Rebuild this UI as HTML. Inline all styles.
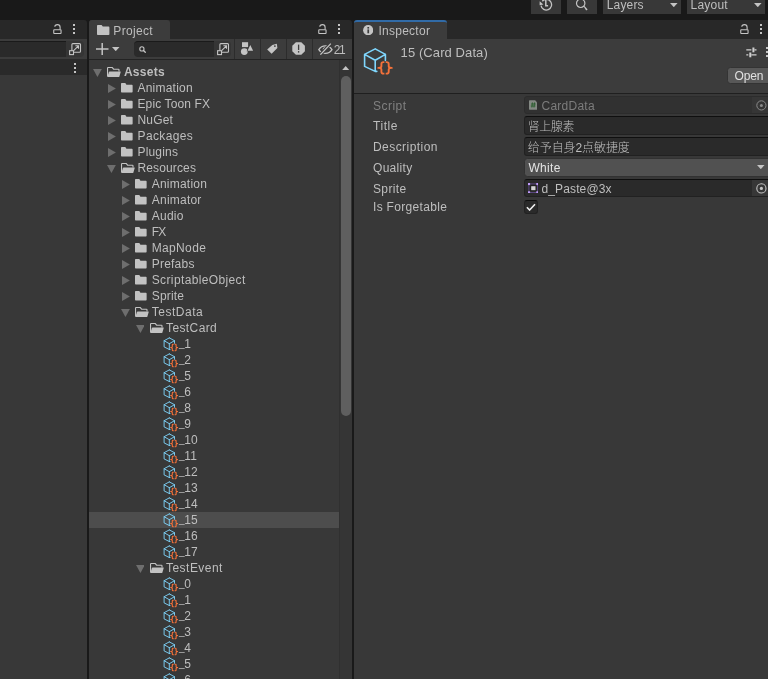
<!DOCTYPE html>
<html><head><meta charset="utf-8"><title>Unity</title>
<style>
html,body{margin:0;padding:0;}
body{width:768px;height:679px;overflow:hidden;background:#191919;position:relative;font-family:"Liberation Sans","Noto Sans CJK SC",sans-serif;font-size:12px;color:#bebebe;}
#r{position:absolute;left:0;top:0;width:768px;height:679px;overflow:hidden;will-change:transform;}
#r div,#r svg,#r span{position:absolute;display:block;}
#r span{white-space:pre;line-height:16px;height:16px;}
#r i{font-style:normal;font-size:10px;position:relative;top:-0.6px;margin-right:-0.45px;}
</style></head><body><div id="r">
<div style="left:531px;top:0px;width:30px;height:13.6px;background:#383838;"></div>
<div style="left:567px;top:0px;width:30px;height:13.6px;background:#383838;"></div>
<div style="left:603px;top:0px;width:78px;height:13.6px;background:#383838;"></div>
<div style="left:687px;top:0px;width:78px;height:13.6px;background:#383838;"></div>
<svg style="left:538px;top:0px" width="16" height="12" viewBox="0 0 16 12"><path d="M3.05 5.6A5.3 5.3 0 1 0 4.3 1.2" fill="none" stroke="#c4c4c4" stroke-width="1.3"/><path d="M1.7 1.3L5.4 4.4L1.6 5.2Z" fill="#c4c4c4"/><path d="M7.8 -1V5.7H10.1" fill="none" stroke="#c4c4c4" stroke-width="1.5"/></svg>
<svg style="left:574px;top:0px" width="16" height="12" viewBox="0 0 16 12"><circle cx="6.7" cy="3.3" r="4.2" fill="none" stroke="#c4c4c4" stroke-width="1.2"/><path d="M9.7 6.6L10.6 5.9L13.6 9.4L12.2 10.6Z" fill="#c4c4c4"/></svg>
<svg style="left:670.2px;top:3.2px" width="7.6" height="4.2" viewBox="0 0 7.6 4.2"><path d="M0 0H7.6L3.8 4.2Z" fill="#c4c4c4"/></svg>
<svg style="left:754.2px;top:3.2px" width="7.6" height="4.2" viewBox="0 0 7.6 4.2"><path d="M0 0H7.6L3.8 4.2Z" fill="#c4c4c4"/></svg>
<div style="left:0px;top:20px;width:87.3px;height:18.6px;background:#282828;border-radius:0 3px 0 0"></div>
<div style="left:0px;top:38.5px;width:87.3px;height:20.5px;background:#3c3c3c;"></div>
<div style="left:0px;top:59px;width:87.3px;height:16.2px;background:#2a2a2a;"></div>
<div style="left:0px;top:75.2px;width:87.3px;height:604px;background:#383838;"></div>
<svg style="left:53px;top:24px" width="10" height="11" viewBox="0 0 10 11"><rect x="0.75" y="5.75" width="7.3" height="3.7" rx="0.5" fill="none" stroke="#c4c4c4" stroke-width="1.1"/><path d="M1.8 2.7Q1.9 0.65 4.4 0.65Q7.1 0.65 7.1 3.3V5.6" fill="none" stroke="#c4c4c4" stroke-width="1.1"/></svg>
<div style="left:73px;top:24.1px;width:2.4px;height:2.2px;background:#c4c4c4;"></div>
<div style="left:73px;top:27.9px;width:2.4px;height:2.2px;background:#c4c4c4;"></div>
<div style="left:73px;top:31.7px;width:2.4px;height:2.2px;background:#c4c4c4;"></div>
<div style="left:-4px;top:41px;width:70.2px;height:15.5px;background:#2a2a2a;border-top:1px solid #1a1a1a;box-sizing:border-box"></div>
<div style="left:66.1px;top:41px;width:17.6px;height:15.5px;background:#353535;border-radius:0 4px 4px 0"></div>
<svg style="left:68.85px;top:42.8px" width="13" height="13" viewBox="0 0 13 13"><rect x="2.9" y="0.6" width="8.6" height="8.6" rx="1" fill="none" stroke="#c4c4c4" stroke-width="1.1"/><rect x="0.6" y="7.7" width="3.9" height="3.9" fill="#353535" stroke="#c4c4c4" stroke-width="1.1"/><path d="M4.6 7.6L9.4 2.8M6.4 2.7H9.5V5.8" fill="none" stroke="#c4c4c4" stroke-width="1.1"/></svg>
<div style="left:74px;top:63.2px;width:2.4px;height:2.2px;background:#c4c4c4;"></div>
<div style="left:74px;top:67.2px;width:2.4px;height:2.2px;background:#c4c4c4;"></div>
<div style="left:74px;top:71.2px;width:2.4px;height:2.2px;background:#c4c4c4;"></div>
<div style="left:89.3px;top:20px;width:262.8px;height:18.6px;background:#282828;border-radius:3px 3px 0 0"></div>
<div style="left:89.3px;top:20px;width:80.7px;height:19px;background:#3c3c3c;border-radius:3px 3px 0 0"></div>
<div style="left:89.3px;top:38.5px;width:262.8px;height:20.3px;background:#3c3c3c;"></div>
<div style="left:89.3px;top:58.6px;width:262.8px;height:1px;background:#232323;"></div>
<div style="left:89.3px;top:59.6px;width:262.8px;height:620px;background:#383838;"></div>
<svg style="left:96.7px;top:25px" width="13" height="10" viewBox="0 0 13 10"><path d="M0.8 0H4.6L5.8 1.6H11.6Q12.4 1.6 12.4 2.4V9.2Q12.4 10 11.6 10H0.8Q0 10 0 9.2V0.8Q0 0 0.8 0Z" fill="#c2c2c2"/></svg>
<svg style="left:317.6px;top:24px" width="10" height="11" viewBox="0 0 10 11"><rect x="0.75" y="5.75" width="7.3" height="3.7" rx="0.5" fill="none" stroke="#c4c4c4" stroke-width="1.1"/><path d="M1.8 2.7Q1.9 0.65 4.4 0.65Q7.1 0.65 7.1 3.3V5.6" fill="none" stroke="#c4c4c4" stroke-width="1.1"/></svg>
<div style="left:337.9px;top:24.1px;width:2.4px;height:2.2px;background:#c4c4c4;"></div>
<div style="left:337.9px;top:27.9px;width:2.4px;height:2.2px;background:#c4c4c4;"></div>
<div style="left:337.9px;top:31.7px;width:2.4px;height:2.2px;background:#c4c4c4;"></div>
<svg style="left:95.8px;top:43px" width="13" height="12" viewBox="0 0 13 12"><path d="M6.2 0V12M0 6H12.5" stroke="#c4c4c4" stroke-width="1.5" fill="none"/></svg>
<svg style="left:112.2px;top:47.2px" width="7.5" height="4.2" viewBox="0 0 7.5 4.2"><path d="M0 0H7.5L3.75 4.2Z" fill="#c4c4c4"/></svg>
<div style="left:134.2px;top:41px;width:80px;height:15.5px;background:#2a2a2a;border-radius:4px 0 0 4px;border-top:1px solid #1a1a1a;box-sizing:border-box"></div>
<div style="left:213.7px;top:41px;width:17.7px;height:15.5px;background:#353535;border-radius:0 4px 4px 0"></div>
<svg style="left:138.6px;top:45.8px" width="8" height="8" viewBox="0 0 8 8"><circle cx="2.9" cy="2.9" r="2.1" fill="none" stroke="#c4c4c4" stroke-width="1.1"/><path d="M4.5 4.5L6.3 6.3" stroke="#c4c4c4" stroke-width="1.3" stroke-linecap="round"/></svg>
<svg style="left:216.95px;top:42.8px" width="13" height="13" viewBox="0 0 13 13"><rect x="2.9" y="0.6" width="8.6" height="8.6" rx="1" fill="none" stroke="#c4c4c4" stroke-width="1.1"/><rect x="0.6" y="7.7" width="3.9" height="3.9" fill="#353535" stroke="#c4c4c4" stroke-width="1.1"/><path d="M4.6 7.6L9.4 2.8M6.4 2.7H9.5V5.8" fill="none" stroke="#c4c4c4" stroke-width="1.1"/></svg>
<div style="left:234.2px;top:38.5px;width:1px;height:20.2px;background:#2c2c2c;"></div>
<div style="left:260.2px;top:38.5px;width:1px;height:20.2px;background:#2c2c2c;"></div>
<div style="left:285.9px;top:38.5px;width:1px;height:20.2px;background:#2c2c2c;"></div>
<div style="left:312.2px;top:38.5px;width:1px;height:20.2px;background:#2c2c2c;"></div>
<svg style="left:240px;top:42px" width="14" height="14" viewBox="0 0 14 14"><rect x="2" y="0.2" width="6.1" height="4.9" fill="#c4c4c4"/><circle cx="4.3" cy="9.6" r="3.9" fill="#3c3c3c"/><circle cx="4.3" cy="9.6" r="3.4" fill="#c4c4c4"/><path d="M10.3 2.2L14 9.2H6.6Z" fill="#3c3c3c"/><path d="M10.3 3.1L13.1 8.7H7.5Z" fill="#c4c4c4"/></svg>
<svg style="left:266px;top:42px" width="13" height="13" viewBox="0 0 13 13"><path d="M1.2 7.5L6.3 3L10.8 1.7L11.4 6.1L5.6 11.8Z" fill="#c4c4c4"/><circle cx="8.9" cy="4.1" r="0.9" fill="#3c3c3c"/></svg>
<svg style="left:292px;top:42.1px" width="13.2" height="13" viewBox="0 0 14 14"><path d="M4.1 0.2H9.9L13.8 4.1V9.9L9.9 13.8H4.1L0.2 9.9V4.1Z" fill="#c4c4c4"/><rect x="6.3" y="2.8" width="1.4" height="5.8" fill="#3c3c3c"/><rect x="6.3" y="9.8" width="1.4" height="1.6" fill="#3c3c3c"/></svg>
<svg style="left:317.5px;top:43px" width="16" height="12" viewBox="0 0 16 12"><path d="M0.8 6.6Q3.2 2.8 7.4 2.8Q11.6 2.8 14 6.6Q11.6 10.4 7.4 10.4Q3.2 10.4 0.8 6.6Z" fill="none" stroke="#c4c4c4" stroke-width="1.3"/><path d="M5.2 6.6Q5.4 4.6 7.6 4.6" fill="none" stroke="#c4c4c4" stroke-width="1.2"/><path d="M2.4 11.6L12.8 0.6" stroke="#3c3c3c" stroke-width="3.2"/><path d="M2.4 11.6L12.8 0.6" stroke="#c4c4c4" stroke-width="1.3"/></svg>
<div style="left:339.3px;top:59.6px;width:12.800000000000011px;height:620px;background:#353535;border-left:1px solid #303030;box-sizing:border-box"></div>
<svg style="left:342.3px;top:65.6px" width="7.4" height="4.2" viewBox="0 0 7.4 4.2"><path d="M0 4.2L3.7 0L7.4 4.2Z" fill="#c4c4c4"/></svg>
<div style="left:341px;top:75.6px;width:10.2px;height:340.6px;background:#5f5f5f;border-radius:5.1px"></div>
<svg style="left:92.8px;top:69.1px" width="8.9" height="7.9" viewBox="0 0 8.9 7.9"><path d="M0 0H8.9L4.45 7.9Z" fill="#6e6e6e"/></svg>
<svg style="left:106.75px;top:67.1px" width="14" height="10" viewBox="0 0 14 10"><path d="M0.55 9.6V1.1Q0.55 0.55 1.1 0.55H5.3L6.6 2.2H11.4Q12 2.2 12 2.8V4.4" fill="none" stroke="#c2c2c2" stroke-width="1.1"/><path d="M2.6 4.4H13.4Q13.9 4.4 13.7 4.9L12.4 9.5Q12.2 10 11.7 10H0.4L1.9 4.9Q2.1 4.4 2.6 4.4Z" fill="#c2c2c2"/></svg>
<svg style="left:107.85px;top:84.05px" width="7.9" height="8.9" viewBox="0 0 7.9 8.9"><path d="M0 0L7.9 4.45L0 8.9Z" fill="#6e6e6e"/></svg>
<svg style="left:120.75px;top:83.3px" width="12.2" height="9.6" viewBox="0 0 13 10"><path d="M0.8 0H4.6L5.8 1.7H11.6Q12.4 1.7 12.4 2.5V9.2Q12.4 10 11.6 10H0.8Q0 10 0 9.2V0.8Q0 0 0.8 0Z" fill="#c2c2c2"/></svg>
<svg style="left:107.85px;top:100.05px" width="7.9" height="8.9" viewBox="0 0 7.9 8.9"><path d="M0 0L7.9 4.45L0 8.9Z" fill="#6e6e6e"/></svg>
<svg style="left:120.75px;top:99.3px" width="12.2" height="9.6" viewBox="0 0 13 10"><path d="M0.8 0H4.6L5.8 1.7H11.6Q12.4 1.7 12.4 2.5V9.2Q12.4 10 11.6 10H0.8Q0 10 0 9.2V0.8Q0 0 0.8 0Z" fill="#c2c2c2"/></svg>
<svg style="left:107.85px;top:116.05px" width="7.9" height="8.9" viewBox="0 0 7.9 8.9"><path d="M0 0L7.9 4.45L0 8.9Z" fill="#6e6e6e"/></svg>
<svg style="left:120.75px;top:115.3px" width="12.2" height="9.6" viewBox="0 0 13 10"><path d="M0.8 0H4.6L5.8 1.7H11.6Q12.4 1.7 12.4 2.5V9.2Q12.4 10 11.6 10H0.8Q0 10 0 9.2V0.8Q0 0 0.8 0Z" fill="#c2c2c2"/></svg>
<svg style="left:107.85px;top:132.05px" width="7.9" height="8.9" viewBox="0 0 7.9 8.9"><path d="M0 0L7.9 4.45L0 8.9Z" fill="#6e6e6e"/></svg>
<svg style="left:120.75px;top:131.3px" width="12.2" height="9.6" viewBox="0 0 13 10"><path d="M0.8 0H4.6L5.8 1.7H11.6Q12.4 1.7 12.4 2.5V9.2Q12.4 10 11.6 10H0.8Q0 10 0 9.2V0.8Q0 0 0.8 0Z" fill="#c2c2c2"/></svg>
<svg style="left:107.85px;top:148.05px" width="7.9" height="8.9" viewBox="0 0 7.9 8.9"><path d="M0 0L7.9 4.45L0 8.9Z" fill="#6e6e6e"/></svg>
<svg style="left:120.75px;top:147.3px" width="12.2" height="9.6" viewBox="0 0 13 10"><path d="M0.8 0H4.6L5.8 1.7H11.6Q12.4 1.7 12.4 2.5V9.2Q12.4 10 11.6 10H0.8Q0 10 0 9.2V0.8Q0 0 0.8 0Z" fill="#c2c2c2"/></svg>
<svg style="left:107.05px;top:165.1px" width="8.9" height="7.9" viewBox="0 0 8.9 7.9"><path d="M0 0H8.9L4.45 7.9Z" fill="#6e6e6e"/></svg>
<svg style="left:121.0px;top:163.1px" width="14" height="10" viewBox="0 0 14 10"><path d="M0.55 9.6V1.1Q0.55 0.55 1.1 0.55H5.3L6.6 2.2H11.4Q12 2.2 12 2.8V4.4" fill="none" stroke="#c2c2c2" stroke-width="1.1"/><path d="M2.6 4.4H13.4Q13.9 4.4 13.7 4.9L12.4 9.5Q12.2 10 11.7 10H0.4L1.9 4.9Q2.1 4.4 2.6 4.4Z" fill="#c2c2c2"/></svg>
<svg style="left:122.1px;top:180.05px" width="7.9" height="8.9" viewBox="0 0 7.9 8.9"><path d="M0 0L7.9 4.45L0 8.9Z" fill="#6e6e6e"/></svg>
<svg style="left:135.0px;top:179.3px" width="12.2" height="9.6" viewBox="0 0 13 10"><path d="M0.8 0H4.6L5.8 1.7H11.6Q12.4 1.7 12.4 2.5V9.2Q12.4 10 11.6 10H0.8Q0 10 0 9.2V0.8Q0 0 0.8 0Z" fill="#c2c2c2"/></svg>
<svg style="left:122.1px;top:196.05px" width="7.9" height="8.9" viewBox="0 0 7.9 8.9"><path d="M0 0L7.9 4.45L0 8.9Z" fill="#6e6e6e"/></svg>
<svg style="left:135.0px;top:195.3px" width="12.2" height="9.6" viewBox="0 0 13 10"><path d="M0.8 0H4.6L5.8 1.7H11.6Q12.4 1.7 12.4 2.5V9.2Q12.4 10 11.6 10H0.8Q0 10 0 9.2V0.8Q0 0 0.8 0Z" fill="#c2c2c2"/></svg>
<svg style="left:122.1px;top:212.05px" width="7.9" height="8.9" viewBox="0 0 7.9 8.9"><path d="M0 0L7.9 4.45L0 8.9Z" fill="#6e6e6e"/></svg>
<svg style="left:135.0px;top:211.3px" width="12.2" height="9.6" viewBox="0 0 13 10"><path d="M0.8 0H4.6L5.8 1.7H11.6Q12.4 1.7 12.4 2.5V9.2Q12.4 10 11.6 10H0.8Q0 10 0 9.2V0.8Q0 0 0.8 0Z" fill="#c2c2c2"/></svg>
<svg style="left:122.1px;top:228.05px" width="7.9" height="8.9" viewBox="0 0 7.9 8.9"><path d="M0 0L7.9 4.45L0 8.9Z" fill="#6e6e6e"/></svg>
<svg style="left:135.0px;top:227.3px" width="12.2" height="9.6" viewBox="0 0 13 10"><path d="M0.8 0H4.6L5.8 1.7H11.6Q12.4 1.7 12.4 2.5V9.2Q12.4 10 11.6 10H0.8Q0 10 0 9.2V0.8Q0 0 0.8 0Z" fill="#c2c2c2"/></svg>
<svg style="left:122.1px;top:244.05px" width="7.9" height="8.9" viewBox="0 0 7.9 8.9"><path d="M0 0L7.9 4.45L0 8.9Z" fill="#6e6e6e"/></svg>
<svg style="left:135.0px;top:243.3px" width="12.2" height="9.6" viewBox="0 0 13 10"><path d="M0.8 0H4.6L5.8 1.7H11.6Q12.4 1.7 12.4 2.5V9.2Q12.4 10 11.6 10H0.8Q0 10 0 9.2V0.8Q0 0 0.8 0Z" fill="#c2c2c2"/></svg>
<svg style="left:122.1px;top:260.05px" width="7.9" height="8.9" viewBox="0 0 7.9 8.9"><path d="M0 0L7.9 4.45L0 8.9Z" fill="#6e6e6e"/></svg>
<svg style="left:135.0px;top:259.3px" width="12.2" height="9.6" viewBox="0 0 13 10"><path d="M0.8 0H4.6L5.8 1.7H11.6Q12.4 1.7 12.4 2.5V9.2Q12.4 10 11.6 10H0.8Q0 10 0 9.2V0.8Q0 0 0.8 0Z" fill="#c2c2c2"/></svg>
<svg style="left:122.1px;top:276.05px" width="7.9" height="8.9" viewBox="0 0 7.9 8.9"><path d="M0 0L7.9 4.45L0 8.9Z" fill="#6e6e6e"/></svg>
<svg style="left:135.0px;top:275.3px" width="12.2" height="9.6" viewBox="0 0 13 10"><path d="M0.8 0H4.6L5.8 1.7H11.6Q12.4 1.7 12.4 2.5V9.2Q12.4 10 11.6 10H0.8Q0 10 0 9.2V0.8Q0 0 0.8 0Z" fill="#c2c2c2"/></svg>
<svg style="left:122.1px;top:292.05px" width="7.9" height="8.9" viewBox="0 0 7.9 8.9"><path d="M0 0L7.9 4.45L0 8.9Z" fill="#6e6e6e"/></svg>
<svg style="left:135.0px;top:291.3px" width="12.2" height="9.6" viewBox="0 0 13 10"><path d="M0.8 0H4.6L5.8 1.7H11.6Q12.4 1.7 12.4 2.5V9.2Q12.4 10 11.6 10H0.8Q0 10 0 9.2V0.8Q0 0 0.8 0Z" fill="#c2c2c2"/></svg>
<svg style="left:121.3px;top:309.1px" width="8.9" height="7.9" viewBox="0 0 8.9 7.9"><path d="M0 0H8.9L4.45 7.9Z" fill="#6e6e6e"/></svg>
<svg style="left:135.25px;top:307.1px" width="14" height="10" viewBox="0 0 14 10"><path d="M0.55 9.6V1.1Q0.55 0.55 1.1 0.55H5.3L6.6 2.2H11.4Q12 2.2 12 2.8V4.4" fill="none" stroke="#c2c2c2" stroke-width="1.1"/><path d="M2.6 4.4H13.4Q13.9 4.4 13.7 4.9L12.4 9.5Q12.2 10 11.7 10H0.4L1.9 4.9Q2.1 4.4 2.6 4.4Z" fill="#c2c2c2"/></svg>
<svg style="left:135.55px;top:325.1px" width="8.9" height="7.9" viewBox="0 0 8.9 7.9"><path d="M0 0H8.9L4.45 7.9Z" fill="#6e6e6e"/></svg>
<svg style="left:149.5px;top:323.1px" width="14" height="10" viewBox="0 0 14 10"><path d="M0.55 9.6V1.1Q0.55 0.55 1.1 0.55H5.3L6.6 2.2H11.4Q12 2.2 12 2.8V4.4" fill="none" stroke="#c2c2c2" stroke-width="1.1"/><path d="M2.6 4.4H13.4Q13.9 4.4 13.7 4.9L12.4 9.5Q12.2 10 11.7 10H0.4L1.9 4.9Q2.1 4.4 2.6 4.4Z" fill="#c2c2c2"/></svg>
<svg style="left:161.8px;top:335.9px" width="16" height="16" viewBox="0 0 32 32"><g fill="none" stroke="#7fd6fd" stroke-width="1.8" stroke-linejoin="round" stroke-linecap="round"><path d="M14.6 3.8L25 9.4V14.6M14.6 3.8L4.2 9.4V21.8L14.6 27V15.4L4.2 9.4M14.6 15.4L25 9.4M14.6 27H16"/></g><g fill="none" stroke="#f4713a" stroke-width="2.2" stroke-linejoin="round"><path d="M23.6 16.6H22Q20.6 16.6 20.6 18V21.4Q20.6 23.1 17.4 23.1Q20.6 23.1 20.6 24.8V28.2Q20.6 29.6 22 29.6H23.6"/><path d="M25.2 16.6H26.8Q28.2 16.6 28.2 18V21.4Q28.2 23.1 31.4 23.1Q28.2 23.1 28.2 24.8V28.2Q28.2 29.6 26.8 29.6H25.2"/></g></svg>
<svg style="left:161.8px;top:351.9px" width="16" height="16" viewBox="0 0 32 32"><g fill="none" stroke="#7fd6fd" stroke-width="1.8" stroke-linejoin="round" stroke-linecap="round"><path d="M14.6 3.8L25 9.4V14.6M14.6 3.8L4.2 9.4V21.8L14.6 27V15.4L4.2 9.4M14.6 15.4L25 9.4M14.6 27H16"/></g><g fill="none" stroke="#f4713a" stroke-width="2.2" stroke-linejoin="round"><path d="M23.6 16.6H22Q20.6 16.6 20.6 18V21.4Q20.6 23.1 17.4 23.1Q20.6 23.1 20.6 24.8V28.2Q20.6 29.6 22 29.6H23.6"/><path d="M25.2 16.6H26.8Q28.2 16.6 28.2 18V21.4Q28.2 23.1 31.4 23.1Q28.2 23.1 28.2 24.8V28.2Q28.2 29.6 26.8 29.6H25.2"/></g></svg>
<svg style="left:161.8px;top:367.9px" width="16" height="16" viewBox="0 0 32 32"><g fill="none" stroke="#7fd6fd" stroke-width="1.8" stroke-linejoin="round" stroke-linecap="round"><path d="M14.6 3.8L25 9.4V14.6M14.6 3.8L4.2 9.4V21.8L14.6 27V15.4L4.2 9.4M14.6 15.4L25 9.4M14.6 27H16"/></g><g fill="none" stroke="#f4713a" stroke-width="2.2" stroke-linejoin="round"><path d="M23.6 16.6H22Q20.6 16.6 20.6 18V21.4Q20.6 23.1 17.4 23.1Q20.6 23.1 20.6 24.8V28.2Q20.6 29.6 22 29.6H23.6"/><path d="M25.2 16.6H26.8Q28.2 16.6 28.2 18V21.4Q28.2 23.1 31.4 23.1Q28.2 23.1 28.2 24.8V28.2Q28.2 29.6 26.8 29.6H25.2"/></g></svg>
<svg style="left:161.8px;top:383.9px" width="16" height="16" viewBox="0 0 32 32"><g fill="none" stroke="#7fd6fd" stroke-width="1.8" stroke-linejoin="round" stroke-linecap="round"><path d="M14.6 3.8L25 9.4V14.6M14.6 3.8L4.2 9.4V21.8L14.6 27V15.4L4.2 9.4M14.6 15.4L25 9.4M14.6 27H16"/></g><g fill="none" stroke="#f4713a" stroke-width="2.2" stroke-linejoin="round"><path d="M23.6 16.6H22Q20.6 16.6 20.6 18V21.4Q20.6 23.1 17.4 23.1Q20.6 23.1 20.6 24.8V28.2Q20.6 29.6 22 29.6H23.6"/><path d="M25.2 16.6H26.8Q28.2 16.6 28.2 18V21.4Q28.2 23.1 31.4 23.1Q28.2 23.1 28.2 24.8V28.2Q28.2 29.6 26.8 29.6H25.2"/></g></svg>
<svg style="left:161.8px;top:399.9px" width="16" height="16" viewBox="0 0 32 32"><g fill="none" stroke="#7fd6fd" stroke-width="1.8" stroke-linejoin="round" stroke-linecap="round"><path d="M14.6 3.8L25 9.4V14.6M14.6 3.8L4.2 9.4V21.8L14.6 27V15.4L4.2 9.4M14.6 15.4L25 9.4M14.6 27H16"/></g><g fill="none" stroke="#f4713a" stroke-width="2.2" stroke-linejoin="round"><path d="M23.6 16.6H22Q20.6 16.6 20.6 18V21.4Q20.6 23.1 17.4 23.1Q20.6 23.1 20.6 24.8V28.2Q20.6 29.6 22 29.6H23.6"/><path d="M25.2 16.6H26.8Q28.2 16.6 28.2 18V21.4Q28.2 23.1 31.4 23.1Q28.2 23.1 28.2 24.8V28.2Q28.2 29.6 26.8 29.6H25.2"/></g></svg>
<svg style="left:161.8px;top:415.9px" width="16" height="16" viewBox="0 0 32 32"><g fill="none" stroke="#7fd6fd" stroke-width="1.8" stroke-linejoin="round" stroke-linecap="round"><path d="M14.6 3.8L25 9.4V14.6M14.6 3.8L4.2 9.4V21.8L14.6 27V15.4L4.2 9.4M14.6 15.4L25 9.4M14.6 27H16"/></g><g fill="none" stroke="#f4713a" stroke-width="2.2" stroke-linejoin="round"><path d="M23.6 16.6H22Q20.6 16.6 20.6 18V21.4Q20.6 23.1 17.4 23.1Q20.6 23.1 20.6 24.8V28.2Q20.6 29.6 22 29.6H23.6"/><path d="M25.2 16.6H26.8Q28.2 16.6 28.2 18V21.4Q28.2 23.1 31.4 23.1Q28.2 23.1 28.2 24.8V28.2Q28.2 29.6 26.8 29.6H25.2"/></g></svg>
<svg style="left:161.8px;top:431.9px" width="16" height="16" viewBox="0 0 32 32"><g fill="none" stroke="#7fd6fd" stroke-width="1.8" stroke-linejoin="round" stroke-linecap="round"><path d="M14.6 3.8L25 9.4V14.6M14.6 3.8L4.2 9.4V21.8L14.6 27V15.4L4.2 9.4M14.6 15.4L25 9.4M14.6 27H16"/></g><g fill="none" stroke="#f4713a" stroke-width="2.2" stroke-linejoin="round"><path d="M23.6 16.6H22Q20.6 16.6 20.6 18V21.4Q20.6 23.1 17.4 23.1Q20.6 23.1 20.6 24.8V28.2Q20.6 29.6 22 29.6H23.6"/><path d="M25.2 16.6H26.8Q28.2 16.6 28.2 18V21.4Q28.2 23.1 31.4 23.1Q28.2 23.1 28.2 24.8V28.2Q28.2 29.6 26.8 29.6H25.2"/></g></svg>
<svg style="left:161.8px;top:447.9px" width="16" height="16" viewBox="0 0 32 32"><g fill="none" stroke="#7fd6fd" stroke-width="1.8" stroke-linejoin="round" stroke-linecap="round"><path d="M14.6 3.8L25 9.4V14.6M14.6 3.8L4.2 9.4V21.8L14.6 27V15.4L4.2 9.4M14.6 15.4L25 9.4M14.6 27H16"/></g><g fill="none" stroke="#f4713a" stroke-width="2.2" stroke-linejoin="round"><path d="M23.6 16.6H22Q20.6 16.6 20.6 18V21.4Q20.6 23.1 17.4 23.1Q20.6 23.1 20.6 24.8V28.2Q20.6 29.6 22 29.6H23.6"/><path d="M25.2 16.6H26.8Q28.2 16.6 28.2 18V21.4Q28.2 23.1 31.4 23.1Q28.2 23.1 28.2 24.8V28.2Q28.2 29.6 26.8 29.6H25.2"/></g></svg>
<svg style="left:161.8px;top:463.9px" width="16" height="16" viewBox="0 0 32 32"><g fill="none" stroke="#7fd6fd" stroke-width="1.8" stroke-linejoin="round" stroke-linecap="round"><path d="M14.6 3.8L25 9.4V14.6M14.6 3.8L4.2 9.4V21.8L14.6 27V15.4L4.2 9.4M14.6 15.4L25 9.4M14.6 27H16"/></g><g fill="none" stroke="#f4713a" stroke-width="2.2" stroke-linejoin="round"><path d="M23.6 16.6H22Q20.6 16.6 20.6 18V21.4Q20.6 23.1 17.4 23.1Q20.6 23.1 20.6 24.8V28.2Q20.6 29.6 22 29.6H23.6"/><path d="M25.2 16.6H26.8Q28.2 16.6 28.2 18V21.4Q28.2 23.1 31.4 23.1Q28.2 23.1 28.2 24.8V28.2Q28.2 29.6 26.8 29.6H25.2"/></g></svg>
<svg style="left:161.8px;top:479.9px" width="16" height="16" viewBox="0 0 32 32"><g fill="none" stroke="#7fd6fd" stroke-width="1.8" stroke-linejoin="round" stroke-linecap="round"><path d="M14.6 3.8L25 9.4V14.6M14.6 3.8L4.2 9.4V21.8L14.6 27V15.4L4.2 9.4M14.6 15.4L25 9.4M14.6 27H16"/></g><g fill="none" stroke="#f4713a" stroke-width="2.2" stroke-linejoin="round"><path d="M23.6 16.6H22Q20.6 16.6 20.6 18V21.4Q20.6 23.1 17.4 23.1Q20.6 23.1 20.6 24.8V28.2Q20.6 29.6 22 29.6H23.6"/><path d="M25.2 16.6H26.8Q28.2 16.6 28.2 18V21.4Q28.2 23.1 31.4 23.1Q28.2 23.1 28.2 24.8V28.2Q28.2 29.6 26.8 29.6H25.2"/></g></svg>
<svg style="left:161.8px;top:495.9px" width="16" height="16" viewBox="0 0 32 32"><g fill="none" stroke="#7fd6fd" stroke-width="1.8" stroke-linejoin="round" stroke-linecap="round"><path d="M14.6 3.8L25 9.4V14.6M14.6 3.8L4.2 9.4V21.8L14.6 27V15.4L4.2 9.4M14.6 15.4L25 9.4M14.6 27H16"/></g><g fill="none" stroke="#f4713a" stroke-width="2.2" stroke-linejoin="round"><path d="M23.6 16.6H22Q20.6 16.6 20.6 18V21.4Q20.6 23.1 17.4 23.1Q20.6 23.1 20.6 24.8V28.2Q20.6 29.6 22 29.6H23.6"/><path d="M25.2 16.6H26.8Q28.2 16.6 28.2 18V21.4Q28.2 23.1 31.4 23.1Q28.2 23.1 28.2 24.8V28.2Q28.2 29.6 26.8 29.6H25.2"/></g></svg>
<div style="left:89.3px;top:512px;width:249.7px;height:16px;background:#4d4d4d;"></div>
<svg style="left:161.8px;top:511.9px" width="16" height="16" viewBox="0 0 32 32"><g fill="none" stroke="#7fd6fd" stroke-width="1.8" stroke-linejoin="round" stroke-linecap="round"><path d="M14.6 3.8L25 9.4V14.6M14.6 3.8L4.2 9.4V21.8L14.6 27V15.4L4.2 9.4M14.6 15.4L25 9.4M14.6 27H16"/></g><g fill="none" stroke="#f4713a" stroke-width="2.2" stroke-linejoin="round"><path d="M23.6 16.6H22Q20.6 16.6 20.6 18V21.4Q20.6 23.1 17.4 23.1Q20.6 23.1 20.6 24.8V28.2Q20.6 29.6 22 29.6H23.6"/><path d="M25.2 16.6H26.8Q28.2 16.6 28.2 18V21.4Q28.2 23.1 31.4 23.1Q28.2 23.1 28.2 24.8V28.2Q28.2 29.6 26.8 29.6H25.2"/></g></svg>
<svg style="left:161.8px;top:527.9px" width="16" height="16" viewBox="0 0 32 32"><g fill="none" stroke="#7fd6fd" stroke-width="1.8" stroke-linejoin="round" stroke-linecap="round"><path d="M14.6 3.8L25 9.4V14.6M14.6 3.8L4.2 9.4V21.8L14.6 27V15.4L4.2 9.4M14.6 15.4L25 9.4M14.6 27H16"/></g><g fill="none" stroke="#f4713a" stroke-width="2.2" stroke-linejoin="round"><path d="M23.6 16.6H22Q20.6 16.6 20.6 18V21.4Q20.6 23.1 17.4 23.1Q20.6 23.1 20.6 24.8V28.2Q20.6 29.6 22 29.6H23.6"/><path d="M25.2 16.6H26.8Q28.2 16.6 28.2 18V21.4Q28.2 23.1 31.4 23.1Q28.2 23.1 28.2 24.8V28.2Q28.2 29.6 26.8 29.6H25.2"/></g></svg>
<svg style="left:161.8px;top:543.9px" width="16" height="16" viewBox="0 0 32 32"><g fill="none" stroke="#7fd6fd" stroke-width="1.8" stroke-linejoin="round" stroke-linecap="round"><path d="M14.6 3.8L25 9.4V14.6M14.6 3.8L4.2 9.4V21.8L14.6 27V15.4L4.2 9.4M14.6 15.4L25 9.4M14.6 27H16"/></g><g fill="none" stroke="#f4713a" stroke-width="2.2" stroke-linejoin="round"><path d="M23.6 16.6H22Q20.6 16.6 20.6 18V21.4Q20.6 23.1 17.4 23.1Q20.6 23.1 20.6 24.8V28.2Q20.6 29.6 22 29.6H23.6"/><path d="M25.2 16.6H26.8Q28.2 16.6 28.2 18V21.4Q28.2 23.1 31.4 23.1Q28.2 23.1 28.2 24.8V28.2Q28.2 29.6 26.8 29.6H25.2"/></g></svg>
<svg style="left:135.55px;top:565.1px" width="8.9" height="7.9" viewBox="0 0 8.9 7.9"><path d="M0 0H8.9L4.45 7.9Z" fill="#6e6e6e"/></svg>
<svg style="left:149.5px;top:563.1px" width="14" height="10" viewBox="0 0 14 10"><path d="M0.55 9.6V1.1Q0.55 0.55 1.1 0.55H5.3L6.6 2.2H11.4Q12 2.2 12 2.8V4.4" fill="none" stroke="#c2c2c2" stroke-width="1.1"/><path d="M2.6 4.4H13.4Q13.9 4.4 13.7 4.9L12.4 9.5Q12.2 10 11.7 10H0.4L1.9 4.9Q2.1 4.4 2.6 4.4Z" fill="#c2c2c2"/></svg>
<svg style="left:161.8px;top:575.9px" width="16" height="16" viewBox="0 0 32 32"><g fill="none" stroke="#7fd6fd" stroke-width="1.8" stroke-linejoin="round" stroke-linecap="round"><path d="M14.6 3.8L25 9.4V14.6M14.6 3.8L4.2 9.4V21.8L14.6 27V15.4L4.2 9.4M14.6 15.4L25 9.4M14.6 27H16"/></g><g fill="none" stroke="#f4713a" stroke-width="2.2" stroke-linejoin="round"><path d="M23.6 16.6H22Q20.6 16.6 20.6 18V21.4Q20.6 23.1 17.4 23.1Q20.6 23.1 20.6 24.8V28.2Q20.6 29.6 22 29.6H23.6"/><path d="M25.2 16.6H26.8Q28.2 16.6 28.2 18V21.4Q28.2 23.1 31.4 23.1Q28.2 23.1 28.2 24.8V28.2Q28.2 29.6 26.8 29.6H25.2"/></g></svg>
<svg style="left:161.8px;top:591.9px" width="16" height="16" viewBox="0 0 32 32"><g fill="none" stroke="#7fd6fd" stroke-width="1.8" stroke-linejoin="round" stroke-linecap="round"><path d="M14.6 3.8L25 9.4V14.6M14.6 3.8L4.2 9.4V21.8L14.6 27V15.4L4.2 9.4M14.6 15.4L25 9.4M14.6 27H16"/></g><g fill="none" stroke="#f4713a" stroke-width="2.2" stroke-linejoin="round"><path d="M23.6 16.6H22Q20.6 16.6 20.6 18V21.4Q20.6 23.1 17.4 23.1Q20.6 23.1 20.6 24.8V28.2Q20.6 29.6 22 29.6H23.6"/><path d="M25.2 16.6H26.8Q28.2 16.6 28.2 18V21.4Q28.2 23.1 31.4 23.1Q28.2 23.1 28.2 24.8V28.2Q28.2 29.6 26.8 29.6H25.2"/></g></svg>
<svg style="left:161.8px;top:607.9px" width="16" height="16" viewBox="0 0 32 32"><g fill="none" stroke="#7fd6fd" stroke-width="1.8" stroke-linejoin="round" stroke-linecap="round"><path d="M14.6 3.8L25 9.4V14.6M14.6 3.8L4.2 9.4V21.8L14.6 27V15.4L4.2 9.4M14.6 15.4L25 9.4M14.6 27H16"/></g><g fill="none" stroke="#f4713a" stroke-width="2.2" stroke-linejoin="round"><path d="M23.6 16.6H22Q20.6 16.6 20.6 18V21.4Q20.6 23.1 17.4 23.1Q20.6 23.1 20.6 24.8V28.2Q20.6 29.6 22 29.6H23.6"/><path d="M25.2 16.6H26.8Q28.2 16.6 28.2 18V21.4Q28.2 23.1 31.4 23.1Q28.2 23.1 28.2 24.8V28.2Q28.2 29.6 26.8 29.6H25.2"/></g></svg>
<svg style="left:161.8px;top:623.9px" width="16" height="16" viewBox="0 0 32 32"><g fill="none" stroke="#7fd6fd" stroke-width="1.8" stroke-linejoin="round" stroke-linecap="round"><path d="M14.6 3.8L25 9.4V14.6M14.6 3.8L4.2 9.4V21.8L14.6 27V15.4L4.2 9.4M14.6 15.4L25 9.4M14.6 27H16"/></g><g fill="none" stroke="#f4713a" stroke-width="2.2" stroke-linejoin="round"><path d="M23.6 16.6H22Q20.6 16.6 20.6 18V21.4Q20.6 23.1 17.4 23.1Q20.6 23.1 20.6 24.8V28.2Q20.6 29.6 22 29.6H23.6"/><path d="M25.2 16.6H26.8Q28.2 16.6 28.2 18V21.4Q28.2 23.1 31.4 23.1Q28.2 23.1 28.2 24.8V28.2Q28.2 29.6 26.8 29.6H25.2"/></g></svg>
<svg style="left:161.8px;top:639.9px" width="16" height="16" viewBox="0 0 32 32"><g fill="none" stroke="#7fd6fd" stroke-width="1.8" stroke-linejoin="round" stroke-linecap="round"><path d="M14.6 3.8L25 9.4V14.6M14.6 3.8L4.2 9.4V21.8L14.6 27V15.4L4.2 9.4M14.6 15.4L25 9.4M14.6 27H16"/></g><g fill="none" stroke="#f4713a" stroke-width="2.2" stroke-linejoin="round"><path d="M23.6 16.6H22Q20.6 16.6 20.6 18V21.4Q20.6 23.1 17.4 23.1Q20.6 23.1 20.6 24.8V28.2Q20.6 29.6 22 29.6H23.6"/><path d="M25.2 16.6H26.8Q28.2 16.6 28.2 18V21.4Q28.2 23.1 31.4 23.1Q28.2 23.1 28.2 24.8V28.2Q28.2 29.6 26.8 29.6H25.2"/></g></svg>
<svg style="left:161.8px;top:655.9px" width="16" height="16" viewBox="0 0 32 32"><g fill="none" stroke="#7fd6fd" stroke-width="1.8" stroke-linejoin="round" stroke-linecap="round"><path d="M14.6 3.8L25 9.4V14.6M14.6 3.8L4.2 9.4V21.8L14.6 27V15.4L4.2 9.4M14.6 15.4L25 9.4M14.6 27H16"/></g><g fill="none" stroke="#f4713a" stroke-width="2.2" stroke-linejoin="round"><path d="M23.6 16.6H22Q20.6 16.6 20.6 18V21.4Q20.6 23.1 17.4 23.1Q20.6 23.1 20.6 24.8V28.2Q20.6 29.6 22 29.6H23.6"/><path d="M25.2 16.6H26.8Q28.2 16.6 28.2 18V21.4Q28.2 23.1 31.4 23.1Q28.2 23.1 28.2 24.8V28.2Q28.2 29.6 26.8 29.6H25.2"/></g></svg>
<svg style="left:161.8px;top:671.9px" width="16" height="16" viewBox="0 0 32 32"><g fill="none" stroke="#7fd6fd" stroke-width="1.8" stroke-linejoin="round" stroke-linecap="round"><path d="M14.6 3.8L25 9.4V14.6M14.6 3.8L4.2 9.4V21.8L14.6 27V15.4L4.2 9.4M14.6 15.4L25 9.4M14.6 27H16"/></g><g fill="none" stroke="#f4713a" stroke-width="2.2" stroke-linejoin="round"><path d="M23.6 16.6H22Q20.6 16.6 20.6 18V21.4Q20.6 23.1 17.4 23.1Q20.6 23.1 20.6 24.8V28.2Q20.6 29.6 22 29.6H23.6"/><path d="M25.2 16.6H26.8Q28.2 16.6 28.2 18V21.4Q28.2 23.1 31.4 23.1Q28.2 23.1 28.2 24.8V28.2Q28.2 29.6 26.8 29.6H25.2"/></g></svg>
<div style="left:354px;top:20px;width:414px;height:18.6px;background:#282828;border-radius:3px 0 0 0"></div>
<div style="left:354px;top:20px;width:93px;height:19px;background:#3c3c3c;border-radius:3px 3px 0 0;border-top:2px solid #316ba7;box-sizing:border-box"></div>
<div style="left:354px;top:38.5px;width:414px;height:54.2px;background:#3c3c3c;"></div>
<div style="left:354px;top:92.6px;width:414px;height:1px;background:#1f1f1f;"></div>
<div style="left:354px;top:93.6px;width:414px;height:590px;background:#383838;"></div>
<svg style="left:363px;top:25px" width="10.4" height="10.4" viewBox="0 0 10.4 10.4"><circle cx="5.2" cy="5.2" r="5.1" fill="#c4c4c4"/><rect x="4.4" y="4.4" width="1.7" height="3.9" fill="#3c3c3c"/><rect x="4.4" y="2" width="1.7" height="1.6" fill="#3c3c3c"/></svg>
<svg style="left:739.6px;top:24px" width="10" height="11" viewBox="0 0 10 11"><rect x="0.75" y="5.75" width="7.3" height="3.7" rx="0.5" fill="none" stroke="#c4c4c4" stroke-width="1.1"/><path d="M1.8 2.7Q1.9 0.65 4.4 0.65Q7.1 0.65 7.1 3.3V5.6" fill="none" stroke="#c4c4c4" stroke-width="1.1"/></svg>
<div style="left:759.8px;top:24.1px;width:2.4px;height:2.2px;background:#c4c4c4;"></div>
<div style="left:759.8px;top:27.9px;width:2.4px;height:2.2px;background:#c4c4c4;"></div>
<div style="left:759.8px;top:31.7px;width:2.4px;height:2.2px;background:#c4c4c4;"></div>
<svg style="left:361px;top:45px" width="32" height="32" viewBox="0 0 32 32"><g fill="none" stroke="#7fd6fd" stroke-width="1.6" stroke-linejoin="round" stroke-linecap="round"><path d="M14.2 3.9L24.4 9.4V15.4M14.2 3.9L3.6 9.4V21.4L14.2 26.4V15.3L3.6 9.4M14.2 15.3L24.4 9.4M14.2 26.4H15.8"/></g><g fill="none" stroke="#f4713a" stroke-width="1.9" stroke-linejoin="round"><path d="M23.4 17.15H22.4Q20.4 17.15 20.4 19V21.2Q20.4 22.9 17.3 22.9Q20.4 22.9 20.4 24.6V26.8Q20.4 28.65 22.4 28.65H23.4"/><path d="M24.7 17.15H25.7Q27.7 17.15 27.7 19V21.2Q27.7 22.9 30.8 22.9Q27.7 22.9 27.7 24.6V26.8Q27.7 28.65 25.7 28.65H24.7"/></g></svg>
<svg style="left:745.6px;top:46.6px" width="11" height="11" viewBox="0 0 11 11"><path d="M0.3 2.9H5.4M8.4 2.9H10.5M0.3 7.9H2.3M5.3 7.9H10.5" stroke="#d0d0d0" stroke-width="1.1" fill="none"/><rect x="6.4" y="0.5" width="2" height="4.8" fill="#d0d0d0"/><rect x="3.3" y="5.5" width="2" height="4.8" fill="#d0d0d0"/></svg>
<div style="left:765.8px;top:47.0px;width:2.4px;height:2.2px;background:#c4c4c4;"></div>
<div style="left:765.8px;top:50.95px;width:2.4px;height:2.2px;background:#c4c4c4;"></div>
<div style="left:765.8px;top:54.9px;width:2.4px;height:2.2px;background:#c4c4c4;"></div>
<div style="left:727.4px;top:67.1px;width:50px;height:17.3px;background:#585858;border-radius:3.5px;border:0.7px solid #343434;box-sizing:border-box"></div>
<div style="left:524.0999999999999px;top:95.8px;width:260px;height:17.8px;background:#313131;border-radius:3px;border:1px solid #2c2c2c;box-sizing:border-box"></div>
<div style="left:751.8px;top:96.8px;width:20px;height:15.8px;background:#363636;"></div>
<svg style="left:528.6px;top:100.1px" width="8.8" height="9.9" viewBox="0 0 9.2 9.8"><path d="M0.6 0H6.4L9.2 2.8V9.2Q9.2 9.8 8.6 9.8H0.6Q0 9.8 0 9.2V0.6Q0 0 0.6 0Z" fill="#838883"/><path d="M3.6 2.4L3 7.6M5.8 2.4L5.2 7.6M2.2 4H7M1.9 6H6.7" stroke="#2f5f33" stroke-width="1.1" fill="none"/></svg>
<svg style="left:755.6px;top:99.8px" width="11" height="11" viewBox="0 0 11 11"><circle cx="5.4" cy="5.4" r="4.6" fill="none" stroke="#8a8a8a" stroke-width="1"/><circle cx="5.4" cy="5.4" r="1.5" fill="#8a8a8a"/></svg>
<div style="left:524.3px;top:116.1px;width:260px;height:18.5px;background:#2a2a2a;border-radius:3px;border:1px solid #212121;border-top-color:#0f0f0f;box-sizing:border-box"></div>
<div style="left:524.3px;top:137.2px;width:260px;height:18.4px;background:#2a2a2a;border-radius:3px;border:1px solid #212121;border-top-color:#0f0f0f;box-sizing:border-box"></div>
<div style="left:524.3px;top:158.4px;width:260px;height:18.2px;background:#515151;border-radius:3.5px;border:0.6px solid #323232;box-sizing:border-box"></div>
<svg style="left:757.2px;top:165.2px" width="7.6" height="4.2" viewBox="0 0 7.6 4.2"><path d="M0 0H7.6L3.8 4.2Z" fill="#c4c4c4"/></svg>
<div style="left:524.3px;top:179.1px;width:260px;height:17.8px;background:#2a2a2a;border-radius:3px;border:1px solid #212121;border-top-color:#0f0f0f;box-sizing:border-box"></div>
<div style="left:751.8px;top:180.2px;width:20px;height:15.6px;background:#373737;"></div>
<svg style="left:527.8px;top:182.8px" width="10.4" height="10.4" viewBox="0 0 10.4 10.4"><rect x="0.9" y="0.9" width="8.6" height="8.6" fill="none" stroke="#5f4b88" stroke-width="0.9"/><rect x="0" y="0" width="2.1" height="2.1" fill="#c09bfb"/><rect x="8.3" y="0" width="2.1" height="2.1" fill="#c09bfb"/><rect x="0" y="8.3" width="2.1" height="2.1" fill="#c09bfb"/><rect x="8.3" y="8.3" width="2.1" height="2.1" fill="#c09bfb"/><rect x="2.4" y="2.4" width="5.8" height="5.6" fill="#1c1c1c"/><rect x="3.2" y="3.2" width="4.3" height="4" fill="#d4d4d4"/></svg>
<svg style="left:755.6px;top:182.8px" width="11" height="11" viewBox="0 0 11 11"><circle cx="5.4" cy="5.4" r="4.6" fill="none" stroke="#c4c4c4" stroke-width="1.1"/><circle cx="5.4" cy="5.4" r="1.6" fill="#c4c4c4"/></svg>
<div style="left:524.3px;top:200.0px;width:13.5px;height:13.7px;background:#2a2a2a;border-radius:3px;border:1px solid #222;border-top-color:#0f0f0f;box-sizing:border-box"></div>
<svg style="left:526px;top:203px" width="10" height="8" viewBox="0 0 10 8"><path d="M0.9 4.2L3.6 7L9 1.3" fill="none" stroke="#f0f0f0" stroke-width="1.6"/></svg>
<span style="left:606.70px;top:-2.67px;letter-spacing:0.176px">Layers</span>
<span style="left:690.50px;top:-2.67px;letter-spacing:0.231px">Layout</span>
<span style="left:113.30px;top:23.03px;letter-spacing:0.329px">Project</span>
<span style="left:333.70px;top:42.03px;letter-spacing:-1.440px">21</span>
<span style="left:123.90px;top:64.03px;letter-spacing:0.262px;font-weight:700">Assets</span>
<span style="left:137.50px;top:80.03px;letter-spacing:0.215px">Animation</span>
<span style="left:137.50px;top:96.03px;letter-spacing:0.117px">Epic Toon FX</span>
<span style="left:137.50px;top:112.03px;letter-spacing:0.181px">NuGet</span>
<span style="left:137.50px;top:128.03px;letter-spacing:0.373px">Packages</span>
<span style="left:137.50px;top:144.03px;letter-spacing:0.175px">Plugins</span>
<span style="left:137.50px;top:160.03px;letter-spacing:0.134px">Resources</span>
<span style="left:151.75px;top:176.03px;letter-spacing:0.215px">Animation</span>
<span style="left:151.75px;top:192.03px;letter-spacing:0.229px">Animator</span>
<span style="left:151.75px;top:208.03px;letter-spacing:0.233px">Audio</span>
<span style="left:151.75px;top:224.03px;letter-spacing:-0.729px">FX</span>
<span style="left:151.75px;top:240.03px;letter-spacing:0.341px">MapNode</span>
<span style="left:151.75px;top:256.03px;letter-spacing:0.214px">Prefabs</span>
<span style="left:151.75px;top:272.03px;letter-spacing:0.368px">ScriptableObject</span>
<span style="left:151.75px;top:288.03px;letter-spacing:0.162px">Sprite</span>
<span style="left:151.75px;top:304.03px;letter-spacing:0.519px">TestData</span>
<span style="left:166.00px;top:320.03px;letter-spacing:0.396px">TestCard</span>
<span style="left:178.90px;top:336.03px;letter-spacing:0.180px"><i>_</i>1</span>
<span style="left:178.90px;top:352.03px;letter-spacing:0.180px"><i>_</i>2</span>
<span style="left:178.90px;top:368.03px;letter-spacing:0.180px"><i>_</i>5</span>
<span style="left:178.90px;top:384.03px;letter-spacing:0.180px"><i>_</i>6</span>
<span style="left:178.90px;top:400.03px;letter-spacing:0.180px"><i>_</i>8</span>
<span style="left:178.90px;top:416.03px;letter-spacing:0.180px"><i>_</i>9</span>
<span style="left:178.90px;top:432.03px;letter-spacing:0.180px"><i>_</i>10</span>
<span style="left:178.90px;top:448.03px;letter-spacing:0.180px"><i>_</i>11</span>
<span style="left:178.90px;top:464.03px;letter-spacing:0.180px"><i>_</i>12</span>
<span style="left:178.90px;top:480.03px;letter-spacing:0.180px"><i>_</i>13</span>
<span style="left:178.90px;top:496.03px;letter-spacing:0.180px"><i>_</i>14</span>
<span style="left:178.90px;top:512.03px;letter-spacing:0.180px"><i>_</i>15</span>
<span style="left:178.90px;top:528.03px;letter-spacing:0.180px"><i>_</i>16</span>
<span style="left:178.90px;top:544.03px;letter-spacing:0.180px"><i>_</i>17</span>
<span style="left:166.00px;top:560.03px;letter-spacing:0.470px">TestEvent</span>
<span style="left:178.90px;top:576.03px;letter-spacing:0.180px"><i>_</i>0</span>
<span style="left:178.90px;top:592.03px;letter-spacing:0.180px"><i>_</i>1</span>
<span style="left:178.90px;top:608.03px;letter-spacing:0.180px"><i>_</i>2</span>
<span style="left:178.90px;top:624.03px;letter-spacing:0.180px"><i>_</i>3</span>
<span style="left:178.90px;top:640.03px;letter-spacing:0.180px"><i>_</i>4</span>
<span style="left:178.90px;top:656.03px;letter-spacing:0.180px"><i>_</i>5</span>
<span style="left:178.90px;top:672.03px;letter-spacing:0.180px"><i>_</i>6</span>
<span style="left:378.50px;top:23.03px;letter-spacing:0.252px">Inspector</span>
<span style="left:400.60px;top:44.50px;letter-spacing:0.090px;font-size:13px">15 (Card Data)</span>
<span style="left:734.50px;top:68.03px;letter-spacing:-0.160px;color:#e0e0e0">Open</span>
<span style="left:373.00px;top:97.53px;letter-spacing:0.475px;color:#808080">Script</span>
<span style="left:373.00px;top:118.03px;letter-spacing:0.548px">Title</span>
<span style="left:373.00px;top:138.73px;letter-spacing:0.445px">Description</span>
<span style="left:373.00px;top:159.83px;letter-spacing:0.299px">Quality</span>
<span style="left:373.00px;top:180.73px;letter-spacing:0.353px">Sprite</span>
<span style="left:373.00px;top:199.03px;letter-spacing:0.316px">Is Forgetable</span>
<span style="left:541.50px;top:97.53px;letter-spacing:0.245px;color:#7c7c7c">CardData</span>
<span style="left:527.80px;top:119.03px;letter-spacing:-0.462px;font-weight:300">肾上腺素</span>
<span style="left:527.80px;top:140.03px;letter-spacing:-0.081px;font-weight:300">给予自身2点敏捷度</span>
<span style="left:528.40px;top:159.83px;letter-spacing:0.336px;color:#e4e4e4">White</span>
<span style="left:541.50px;top:180.73px;letter-spacing:0.127px">d_Paste@3x</span>
</div></body></html>
